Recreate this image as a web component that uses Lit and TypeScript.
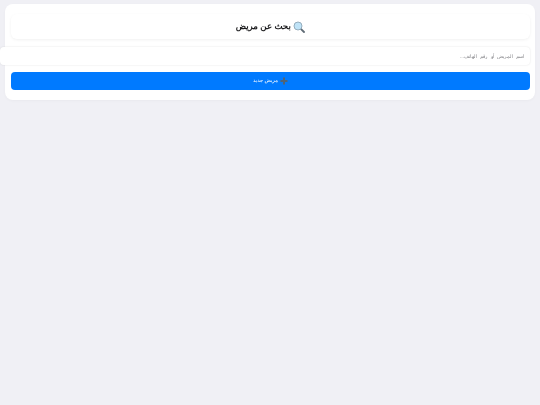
import { LitElement, html, css } from "lit";
import { customElement } from "lit/decorators.js";

@customElement("app-root")
export class AppRoot extends LitElement {
  static styles = css`
    :host {
      display: block;
      min-height: 405px;
      background: #f0f0f5;
      box-sizing: border-box;
      padding: 4px 5px 0;
      font-family: "Liberation Sans", sans-serif;
      text-rendering: geometricPrecision;
      direction: rtl;
      overflow: hidden;
    }
    .card {
      background: #fff;
      border-radius: 8px;
      padding: 10px 5.5px 10px 6px;
      box-shadow: 0 1px 3px rgba(0, 0, 0, 0.03);
      filter: blur(0.3px);
    }
    .head {
      height: 25px;
      border-radius: 6px;
      background: #fff;
      box-shadow: 0 1px 3px rgba(0, 0, 0, 0.06);
      display: flex;
      align-items: center;
      justify-content: center;
      gap: 2px;
      font-size: 8.6px;
      font-weight: 700;
      line-height: 12px;
      color: #1c1c1e;
    }
    .head span { margin-top: -1px; }
    .head svg { width: 12px; height: 12px; flex: none; }
    .search {
      display: block;
      box-sizing: content-box;
      width: 100%;
      height: 18px;
      margin: 8px 0 7px;
      padding: 0 5.5px;
      border: 0;
      outline: 0;
      border-radius: 4px;
      background: #fff;
      box-shadow: 0 0 2px rgba(0, 0, 0, 0.12);
      font: inherit;
      font-size: 5.2px;
      word-spacing: 1.75px;
      direction: rtl;
      text-align: right;
    }
    .search::placeholder { color: #88888c; opacity: 1; }
    .btn {
      height: 18px;
      border-radius: 4px;
      background: #007aff;
      color: #fff;
      font-size: 5.2px;
      display: flex;
      align-items: center;
      justify-content: center;
      gap: 1.5px;
    }
    .btn svg { width: 8px; height: 8px; flex: none; }
  `;

  render() {
    return html`
      <div class="card">
        <div class="head">
          <svg viewBox="0 0 12 12" aria-hidden="true">
            <line x1="7.6" y1="7.6" x2="11" y2="11" stroke="#5f6b75" stroke-width="1.8" stroke-linecap="round" />
            <circle cx="5" cy="5" r="4" fill="#bfe3f7" stroke="#8fa6b5" stroke-width="0.9" />
          </svg>
          <span>بحث عن مريض</span>
        </div>
        <input class="search" placeholder="اسم المريض أو رقم الهاتف..." />
        <div class="btn">
          <svg viewBox="0 0 8 8" aria-hidden="true">
            <path d="M3 .5h2V3h2.5v2H5v2.5H3V5H.5V3H3z" fill="#4f6478" />
          </svg>
          <span>مريض جديد</span>
        </div>
      </div>
    `;
  }
}
